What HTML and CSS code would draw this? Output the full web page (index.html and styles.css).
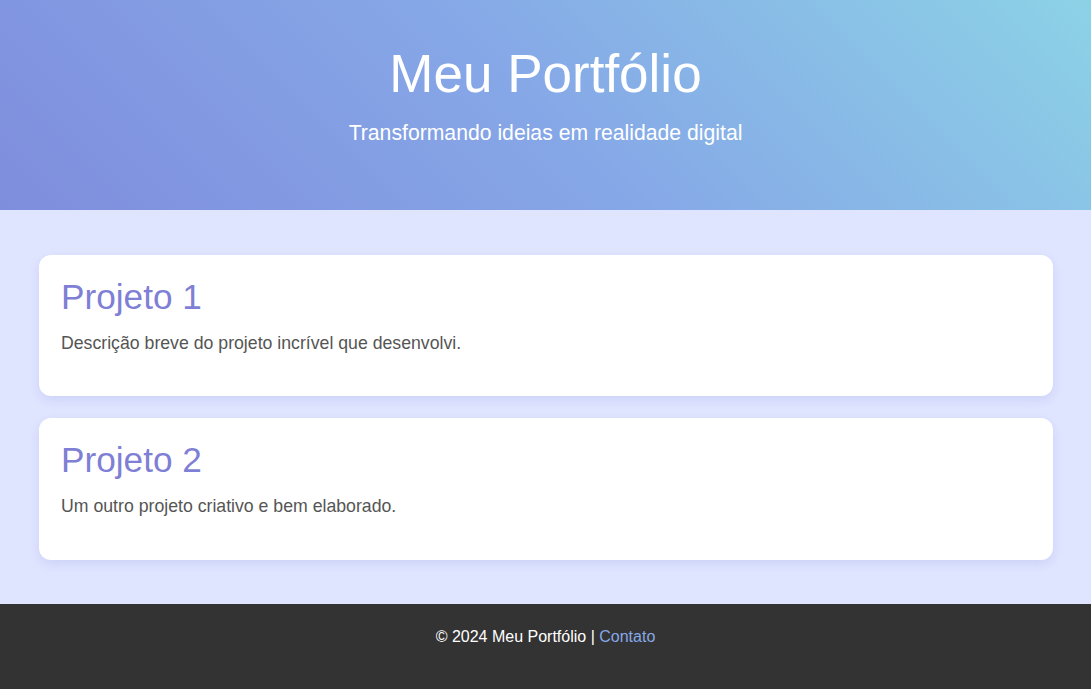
FILE: index.html
```html
<!DOCTYPE html>
<html lang="pt-BR">
<head>
<meta charset="UTF-8">
<title>Meu Portfólio</title>
<link rel="stylesheet" href="styles.css">
</head>
<body>
<header class="hero">
  <h1 class="hero-title">Meu Portfólio</h1>
  <p class="hero-subtitle">Transformando ideias em realidade digital</p>
</header>
<main class="projects">
  <section class="card">
    <h2 class="card-title">Projeto 1</h2>
    <p class="card-text">Descrição breve do projeto incrível que desenvolvi.</p>
  </section>
  <section class="card">
    <h2 class="card-title">Projeto 2</h2>
    <p class="card-text">Um outro projeto criativo e bem elaborado.</p>
  </section>
</main>
<footer class="footer">
  <p class="footer-text">© 2024 Meu Portfólio | <a class="footer-link" href="#">Contato</a></p>
</footer>
</body>
</html>
```

FILE: styles.css
```css
html, body {
  margin: 0;
  padding: 0;
}
body {
  font-family: "Liberation Sans", Arial, sans-serif;
  background: #e0e5ff;
  color: #555;
}
.hero {
  height: 210px;
  box-sizing: border-box;
  padding-top: 43px;
  text-align: center;
  color: #fff;
  background: linear-gradient(45deg, #7f8ddd, #86a8e7, #8cd2e6);
}
.hero-title {
  margin: 0 0 17px;
  font-size: 53px;
  font-weight: normal;
  line-height: normal;
}
.hero-subtitle {
  margin: 0;
  font-size: 21.2px;
  line-height: normal;
}
.projects {
  display: flex;
  flex-direction: column;
  gap: 22px;
  padding: 45px 38px 44px 39px;
}
.card {
  background: #fff;
  border-radius: 12px;
  padding: 22px 22px 42.3px;
  box-shadow: 0 4px 12px rgba(90, 100, 200, 0.15);
}
.card-title {
  margin: 0 0 16px;
  font-size: 35.2px;
  font-weight: normal;
  line-height: normal;
  color: #7f7fd5;
}
.card-text {
  margin: 0;
  font-size: 17.7px;
  line-height: normal;
  color: #555;
}
.footer {
  background: #333;
  color: #fff;
  text-align: center;
  padding: 24px 0 43px;
}
.footer-text {
  margin: 0;
  font-size: 16px;
  line-height: normal;
}
.footer-link {
  color: #86a8e7;
  text-decoration: none;
}
```
